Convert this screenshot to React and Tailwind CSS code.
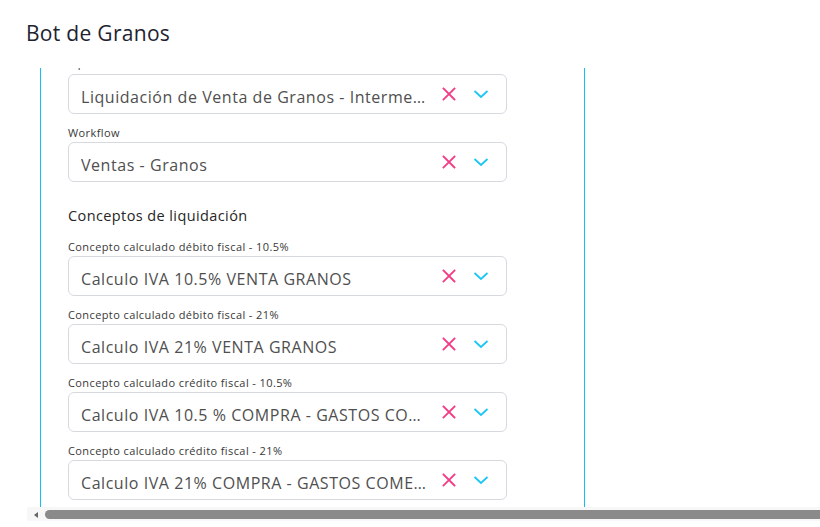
import React from 'react';

const font = { fontFamily: '"Open Sans", "DejaVu Sans", sans-serif' };

const ClearIcon = () => (
  <svg width="14" height="14" viewBox="0 0 14 14" className="shrink-0">
    <path d="M1.5 1.5 L12.5 12.5 M12.5 1.5 L1.5 12.5" stroke="#f23d86" strokeWidth="1.8" strokeLinecap="square" fill="none" />
  </svg>
);

const ChevronIcon = () => (
  <svg width="16" height="10" viewBox="0 0 16 10" className="shrink-0">
    <path d="M1.5 2 L8 8 L14.5 2" stroke="#1cc6f2" strokeWidth="1.8" fill="none" />
  </svg>
);

const SelectBox = ({ value }) => (
  <div className="flex items-center h-[40px] border border-[#d6dade] rounded-md bg-white pl-[12px] pr-[17px]">
    <div className="flex-1 min-w-0 truncate text-[16px] leading-[20px] text-[#4f4f4f] pt-[6px] tracking-[0.55px]">
      {value}
    </div>
    <div className="flex items-center gap-[17px] ml-[14px]">
      <ClearIcon />
      <ChevronIcon />
    </div>
  </div>
);

const Field = ({ label, value, className = '', labelClass = 'mb-[2px]' }) => (
  <div className={className}>
    <div className={`text-[11px] leading-[14px] text-[#383838] tracking-[0.4px] ${labelClass}`}>{label}</div>
    <SelectBox value={value} />
  </div>
);

export default function App() {
  return (
    <div className="w-[820px] h-[527px] bg-white overflow-hidden" style={font}>
      <div className="pl-[26px] pt-[19px] h-[68px]">
        <h1 className="text-[21px] leading-[28px] font-medium text-[#1e2330] tracking-[0.3px]">Bot de Granos</h1>
      </div>
      <div className="ml-[27px] w-[793px]">
        <div className="h-[439px] overflow-hidden pl-[13px]">
          <div className="w-[545px] h-full border-l border-r border-[#10c2f0] flex flex-col">
            <div className="-mt-[12px] pl-[27px] w-[466px]">
              <Field labelClass="mb-[4px]" label="Tipo de documento" value="Liquidación de Venta de Granos - Intermediario" />
              <Field className="mt-[12px]" label="Workflow" value="Ventas - Granos" />
              <h2 className="mt-[24px] text-[14.5px] leading-[20px] text-[#262626] tracking-[0.4px]">Conceptos de liquidación</h2>
              <Field className="mt-[14px]" label="Concepto calculado débito fiscal - 10.5%" value="Calculo IVA 10.5% VENTA GRANOS" />
              <Field className="mt-[12px]" label="Concepto calculado débito fiscal - 21%" value="Calculo IVA 21% VENTA GRANOS" />
              <Field className="mt-[12px]" label="Concepto calculado crédito fiscal - 10.5%" value="Calculo IVA 10.5 % COMPRA - GASTOS COMERCIALES" />
              <Field className="mt-[12px]" label="Concepto calculado crédito fiscal - 21%" value="Calculo IVA 21% COMPRA - GASTOS COMERCIALES" />
            </div>
          </div>
        </div>
        <div className="h-[14px] bg-[#f7f7f7] flex items-start pt-[3px]">
          <div className="w-[18px] h-[9px] flex items-center justify-center">
            <div className="w-0 h-0 border-y-[3.5px] border-y-transparent border-r-[4px] border-r-[#666]" />
          </div>
          <div className="flex-1 h-[9px] bg-[#8a8a8a] rounded-l-full" />
        </div>
      </div>
    </div>
  );
}
